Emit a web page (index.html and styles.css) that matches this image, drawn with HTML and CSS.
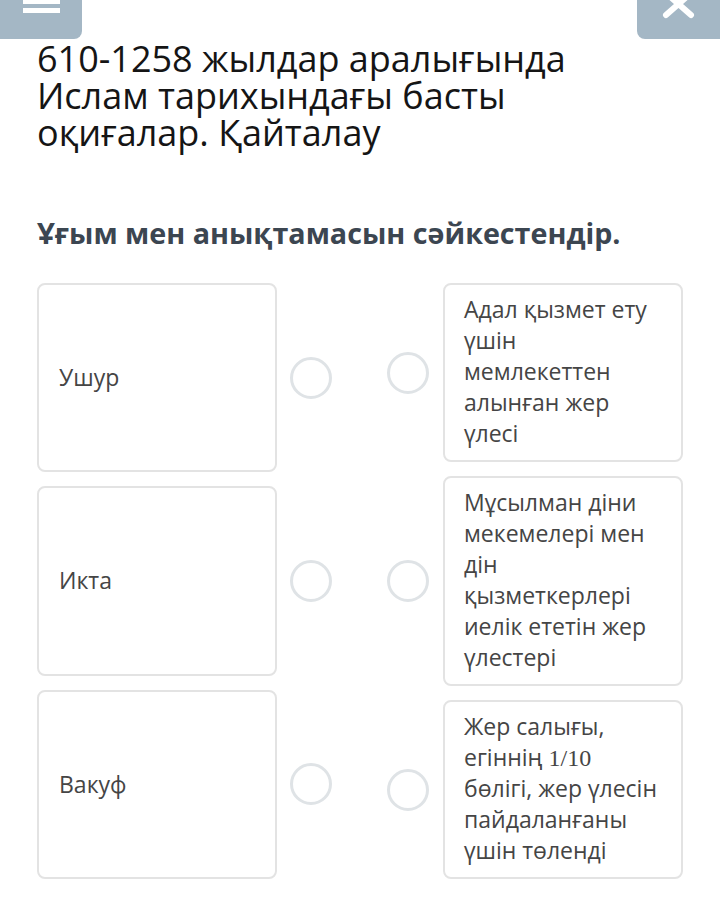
FILE: index.html
```html
<!DOCTYPE html>
<html lang="kk">
<head>
  <meta charset="UTF-8">
  <meta name="viewport" content="width=device-width, initial-scale=1.0">
  <title>Ислам тарихындағы басты оқиғалар</title>
  <link rel="stylesheet" href="styles.css">
</head>
<body>

  <!-- жоғарғы батырмалар -->
  <button class="corner-btn menu-btn" type="button">
    <svg width="82" height="39" viewBox="0 0 82 39">
      <rect x="23" y="-2" width="37" height="6" fill="#fff"/>
      <rect x="23" y="8" width="37" height="5" fill="#fff"/>
    </svg>
  </button>
  <button class="corner-btn close-btn" type="button">
    <svg width="83" height="39" viewBox="0 0 83 39">
      <path d="M29 -7 L54 15 M54 -7 L29 15" stroke="#fff" stroke-width="6" stroke-linecap="round"/>
    </svg>
  </button>

  <div class="page">
    <h1 class="title">610-1258 жылдар аралығында Ислам тарихындағы басты оқиғалар. Қайталау</h1>
    <h2 class="task">Ұғым мен анықтамасын сәйкестендір.</h2>

    <div class="match">
      <div class="col col-left">
        <div class="item">
          <div class="card term">Ушур</div>
          <span class="dot"></span>
        </div>
        <div class="item">
          <div class="card term">Икта</div>
          <span class="dot"></span>
        </div>
        <div class="item">
          <div class="card term">Вакуф</div>
          <span class="dot"></span>
        </div>
      </div>

      <div class="col col-right">
        <div class="item">
          <span class="dot"></span>
          <div class="card def">Адал қызмет ету үшін мемлекеттен алынған жер үлесі</div>
        </div>
        <div class="item">
          <span class="dot"></span>
          <div class="card def">Мұсылман діни мекемелері мен дін қызметкерлері иелік ететін жер үлестері</div>
        </div>
        <div class="item">
          <span class="dot"></span>
          <div class="card def">Жер салығы, егіннің <span class="num">1/10</span> бөлігі, жер үлесін пайдаланғаны үшін төленді</div>
        </div>
      </div>
    </div>
  </div>

</body>
</html>
```

FILE: styles.css
```css
body {
  margin: 0;
  font-family: "Open Sans", "Noto Sans", sans-serif;
  color: #111;
  background: #fff;
}

/* бұрыштағы батырмалар */
.corner-btn {
  position: absolute;
  top: 0;
  height: 39px;
  padding: 0;
  border: none;
  background: #a4b7c5;
  overflow: hidden;
}

.corner-btn svg {
  display: block;
}

.menu-btn {
  left: 0;
  width: 82px;
  border-bottom-right-radius: 8px;
}

.close-btn {
  right: 0;
  width: 83px;
  border-bottom-left-radius: 8px;
}

.page {
  padding: 40px 37px 40px;
}

.title {
  margin: 0;
  font-size: 36px;
  font-weight: 400;
  line-height: 37px;
  color: #151515;
}

.task {
  margin: 64px 0 32px;
  font-size: 28.7px;
  font-weight: 700;
  line-height: 36px;
  color: #3c4651;
}

/* сәйкестендіру аймағы */
.match {
  display: flex;
  justify-content: space-between;
  align-items: stretch;
}

.col {
  display: flex;
  flex-direction: column;
  gap: 14px;
}

.item {
  display: flex;
  align-items: center;
  gap: 13px;
}

.col-left .item {
  flex: 1;
}

.col-right .item {
  gap: 14px;
}

.card {
  width: 240px;
  box-sizing: border-box;
  border: 2px solid #e3e3e3;
  border-radius: 8px;
  font-size: 23px;
  line-height: 31px;
  color: #454545;
}

.term {
  align-self: stretch;
  display: flex;
  align-items: center;
  padding: 0 20px;
}

.def {
  padding: 9px 19px 11px;
}

.num {
  font-family: "Liberation Serif", "DejaVu Serif", serif;
  font-size: 24px;
  line-height: 1;
}

.dot {
  flex: none;
  width: 42px;
  height: 42px;
  box-sizing: border-box;
  border: 3px solid #dfe3e6;
  border-radius: 50%;
}
```
